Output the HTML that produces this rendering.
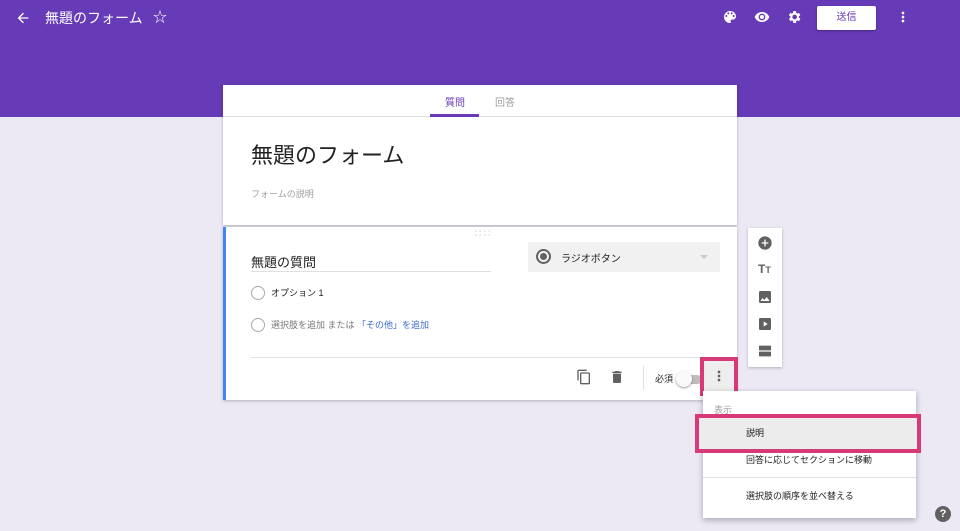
<!DOCTYPE html>
<html><head><meta charset="utf-8"><style>
*{box-sizing:border-box;margin:0;padding:0}
body{width:960px;height:531px;overflow:hidden;background:#ece9f5;font-family:"Liberation Sans","Noto Sans CJK JP",sans-serif;position:relative}
.abs{position:absolute}
.hdr{left:0;top:0;width:960px;height:117px;background:#673ab7}
.card{background:#fff;box-shadow:0 1px 3px rgba(0,0,0,.25)}
.ic{fill:#fff}
.g{fill:#616161}
</style></head><body>
<div class="abs hdr"></div>
<svg class="abs" style="left:15px;top:10px" width="16" height="16" viewBox="0 0 24 24"><path class="ic" d="M20 11H7.8l5.6-5.6L12 4l-8 8 8 8 1.4-1.4L7.8 13H20z"/></svg>
<div class="abs" style="left:45px;top:8px;color:#fff;font-size:14px">無題のフォーム</div>
<div class="abs" style="left:153px;top:7px;color:#fff;font-size:14px">☆</div>
<svg class="abs" style="left:722px;top:9px" width="16" height="16" viewBox="0 0 24 24"><path class="ic" d="M12 3a9 9 0 000 18c.8 0 1.5-.7 1.5-1.5 0-.4-.2-.7-.4-1-.2-.3-.4-.6-.4-1 0-.8.7-1.5 1.5-1.5H16a5 5 0 005-5c0-4.4-4-8-9-8zM6.5 12a1.5 1.5 0 110-3 1.5 1.5 0 010 3zm3-4a1.5 1.5 0 110-3 1.5 1.5 0 010 3zm5 0a1.5 1.5 0 110-3 1.5 1.5 0 010 3zm3 4a1.5 1.5 0 110-3 1.5 1.5 0 010 3z"/></svg>
<svg class="abs" style="left:754px;top:9px" width="16" height="16" viewBox="0 0 24 24"><path class="ic" d="M12 4.5C7 4.5 2.7 7.6 1 12c1.7 4.4 6 7.5 11 7.5s9.3-3.1 11-7.5c-1.7-4.4-6-7.5-11-7.5zM12 17a5 5 0 110-10 5 5 0 010 10zm0-8a3 3 0 100 6 3 3 0 000-6z"/></svg>
<svg class="abs" style="left:786px;top:9px" width="16" height="16" viewBox="0 0 24 24"><path class="ic" d="M19.4 13a7.5 7.5 0 000-2l2.1-1.6-2-3.5-2.5 1a7 7 0 00-1.7-1L15 3h-4l-.4 2.9a7 7 0 00-1.7 1l-2.5-1-2 3.5L6.6 11a7.5 7.5 0 000 2l-2.1 1.6 2 3.5 2.5-1c.5.4 1.1.7 1.7 1L11 21h4l.4-2.9c.6-.3 1.2-.6 1.7-1l2.5 1 2-3.5zM13 15.5a3.5 3.5 0 110-7 3.5 3.5 0 010 7z"/></svg>
<div class="abs" style="left:817px;top:6px;width:59px;height:24px;background:#fff;border-radius:2px;box-shadow:0 1px 2px rgba(0,0,0,.3);text-align:center;line-height:24px;font-size:10px;color:#673ab7">送信</div>
<svg class="abs" style="left:895px;top:9px" width="16" height="16" viewBox="0 0 24 24"><path class="ic" d="M12 8a2 2 0 100-4 2 2 0 000 4zm0 2a2 2 0 100 4 2 2 0 000-4zm0 6a2 2 0 100 4 2 2 0 000-4z"/></svg>

<div class="abs card" style="left:223px;top:85px;width:514px;height:140px"></div>
<div class="abs" style="left:223px;top:116px;width:514px;height:1px;background:#e0e0e0"></div>
<div class="abs" style="left:445px;top:94px;font-size:10px;color:#673ab7">質問</div>
<div class="abs" style="left:495px;top:94px;font-size:10px;color:#9e9e9e">回答</div>
<div class="abs" style="left:430px;top:114px;width:49px;height:3px;background:#673ab7"></div>
<div class="abs" style="left:251px;top:138px;font-size:22px;color:#212121">無題のフォーム</div>
<div class="abs" style="left:251px;top:187px;font-size:9px;color:#9e9e9e">フォームの説明</div>

<div class="abs card" style="left:223px;top:227px;width:514px;height:173px;border-left:3px solid #4285f4"></div>
<div class="abs" style="left:474px;top:228px;font-size:8px;color:#bbb;letter-spacing:1px">∷∷</div>
<div class="abs" style="left:251px;top:252px;font-size:13px;color:#212121">無題の質問</div>
<div class="abs" style="left:251px;top:271px;width:240px;height:1px;background:#e0e0e0"></div>
<div class="abs" style="left:528px;top:242px;width:192px;height:30px;background:#f1f1f1"></div>
<div class="abs" style="left:536px;top:249px;width:15px;height:15px;border:2px solid #616161;border-radius:50%"></div>
<div class="abs" style="left:540px;top:253px;width:7px;height:7px;background:#616161;border-radius:50%"></div>
<div class="abs" style="left:561px;top:250px;font-size:10px;color:#212121">ラジオボタン</div>
<div class="abs" style="left:700px;top:255px;width:0;height:0;border:4px solid transparent;border-top-color:#ccc"></div>
<div class="abs" style="left:251px;top:286px;width:14px;height:14px;border:1.5px solid #aaa;border-radius:50%"></div>
<div class="abs" style="left:271px;top:286px;font-size:9px;color:#212121">オプション 1</div>
<div class="abs" style="left:251px;top:318px;width:14px;height:14px;border:1.5px solid #aaa;border-radius:50%"></div>
<div class="abs" style="left:271px;top:318px;font-size:9px;color:#777">選択肢を追加 または <span style="color:#4169c9">「その他」を追加</span></div>
<div class="abs" style="left:251px;top:357px;width:470px;height:1px;background:#e0e0e0"></div>
<svg class="abs" style="left:576px;top:369px" width="16" height="16" viewBox="0 0 24 24"><path class="g" d="M16 1H4a2 2 0 00-2 2v14h2V3h12zm3 4H8a2 2 0 00-2 2v14a2 2 0 002 2h11a2 2 0 002-2V7a2 2 0 00-2-2zm0 16H8V7h11z"/></svg>
<svg class="abs" style="left:609px;top:369px" width="16" height="16" viewBox="0 0 24 24"><path class="g" d="M6 19a2 2 0 002 2h8a2 2 0 002-2V7H6zM19 4h-3.5l-1-1h-5l-1 1H5v2h14z"/></svg>
<div class="abs" style="left:643px;top:366px;width:1px;height:24px;background:#e0e0e0"></div>
<div class="abs" style="left:655px;top:372px;font-size:9px;color:#212121">必須</div>
<div class="abs" style="left:680px;top:375px;width:22px;height:9px;background:#bdbdbd;border-radius:5px"></div>
<div class="abs" style="left:676px;top:371px;width:16px;height:16px;background:#fafafa;border-radius:50%;box-shadow:0 1px 2px rgba(0,0,0,.4)"></div>
<div class="abs" style="left:700px;top:357px;width:38px;height:39px;border:4px solid #d63a78;background:#eee"></div>
<svg class="abs" style="left:711px;top:368px" width="16" height="16" viewBox="0 0 24 24"><path class="g" d="M12 8a2 2 0 100-4 2 2 0 000 4zm0 2a2 2 0 100 4 2 2 0 000-4zm0 6a2 2 0 100 4 2 2 0 000-4z"/></svg>

<div class="abs card" style="left:748px;top:228px;width:34px;height:139px"></div>
<svg class="abs" style="left:757px;top:235px" width="16" height="16" viewBox="0 0 24 24"><path class="g" d="M12 2a10 10 0 100 20 10 10 0 000-20zm5 11h-4v4h-2v-4H7v-2h4V7h2v4h4z"/></svg>
<div class="abs" style="left:758px;top:262px;font-size:12px;color:#616161;font-weight:bold">T<span style="font-size:9px">T</span></div>
<svg class="abs" style="left:757px;top:289px" width="16" height="16" viewBox="0 0 24 24"><path class="g" d="M21 19V5a2 2 0 00-2-2H5a2 2 0 00-2 2v14a2 2 0 002 2h14a2 2 0 002-2zM8.5 13.5l2.5 3 3.5-4.5 4.5 6H5z"/></svg>
<svg class="abs" style="left:757px;top:316px" width="16" height="16" viewBox="0 0 24 24"><path class="g" d="M19 3H5a2 2 0 00-2 2v14a2 2 0 002 2h14a2 2 0 002-2V5a2 2 0 00-2-2zM10 16V8l6 4z"/></svg>
<svg class="abs" style="left:757px;top:343px" width="16" height="16" viewBox="0 0 24 24"><path class="g" d="M3 4h18v7H3zM3 13h18v7H3z"/></svg>

<div class="abs card" style="left:703px;top:391px;width:213px;height:127px;box-shadow:0 2px 6px rgba(0,0,0,.3)"></div>
<div class="abs" style="left:714px;top:403px;font-size:9px;color:#9e9e9e">表示</div>
<div class="abs" style="left:695px;top:414px;width:226px;height:39px;border:4px solid #d63a78;background:#ececec"></div>
<div class="abs" style="left:746px;top:426px;font-size:9px;color:#212121">説明</div>
<div class="abs" style="left:746px;top:453px;font-size:9px;color:#212121">回答に応じてセクションに移動</div>
<div class="abs" style="left:703px;top:477px;width:213px;height:1px;background:#e0e0e0"></div>
<div class="abs" style="left:746px;top:489px;font-size:9px;color:#212121">選択肢の順序を並べ替える</div>
<div class="abs" style="left:935px;top:506px;width:16px;height:16px;border-radius:50%;background:#616161;color:#fff;font-size:11px;font-weight:bold;text-align:center;line-height:16px">?</div>
</body></html>
